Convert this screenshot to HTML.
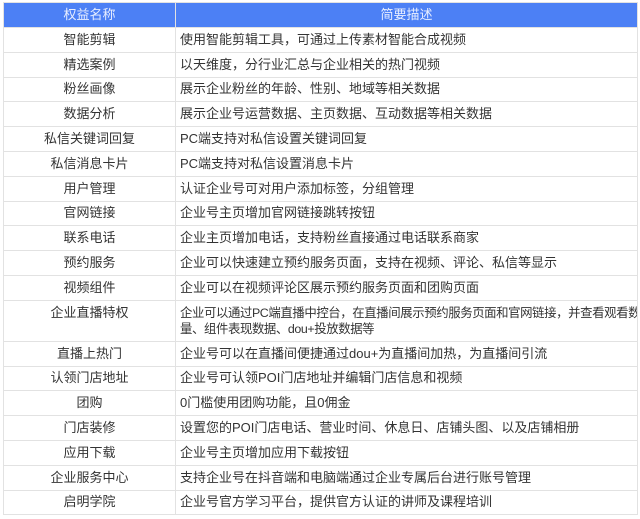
<!DOCTYPE html>
<html><head><meta charset="utf-8"><style>
html,body{margin:0;padding:0;background:#fff;width:640px;height:519px;overflow:hidden}
table{position:absolute;left:3px;top:2px;width:635px;border-collapse:collapse;font-family:"Liberation Sans","Noto Sans CJK SC",sans-serif;font-size:13px;color:#333;table-layout:fixed}
td,th{border:1px solid #e2e2e2;height:23.8px;padding:0 4px;line-height:16px;font-weight:normal}
th{background:#4c80f5;color:#e8eeff;height:24px;text-align:center}
td:first-child{text-align:center}
col.a{width:172px}
</style></head><body>
<table><colgroup><col class="a"><col></colgroup>
<tr><th>权益名称</th><th>简要描述</th></tr>
<tr><td>智能剪辑</td><td>使用智能剪辑工具，可通过上传素材智能合成视频</td></tr>
<tr><td>精选案例</td><td>以天维度，分行业汇总与企业相关的热门视频</td></tr>
<tr><td>粉丝画像</td><td>展示企业粉丝的年龄、性别、地域等相关数据</td></tr>
<tr><td>数据分析</td><td>展示企业号运营数据、主页数据、互动数据等相关数据</td></tr>
<tr><td>私信关键词回复</td><td>PC端支持对私信设置关键词回复</td></tr>
<tr><td>私信消息卡片</td><td>PC端支持对私信设置消息卡片</td></tr>
<tr><td>用户管理</td><td>认证企业号可对用户添加标签，分组管理</td></tr>
<tr><td>官网链接</td><td>企业号主页增加官网链接跳转按钮</td></tr>
<tr><td>联系电话</td><td>企业主页增加电话，支持粉丝直接通过电话联系商家</td></tr>
<tr><td>预约服务</td><td>企业可以快速建立预约服务页面，支持在视频、评论、私信等显示</td></tr>
<tr><td>视频组件</td><td>企业可以在视频评论区展示预约服务页面和团购页面</td></tr>
<tr><td style="vertical-align:top;padding-top:4px;height:36px">企业直播特权</td><td style="padding:3px 0 3px 4px;font-size:12.4px;letter-spacing:-0.4px;white-space:nowrap;overflow:hidden">企业可以通过PC端直播中控台，在直播间展示预约服务页面和官网链接，并查看观看数<br>量、组件表现数据、dou+投放数据等</td></tr>
<tr><td>直播上热门</td><td>企业号可以在直播间便捷通过dou+为直播间加热，为直播间引流</td></tr>
<tr><td>认领门店地址</td><td>企业号可认领POI门店地址并编辑门店信息和视频</td></tr>
<tr><td>团购</td><td>0门槛使用团购功能，且0佣金</td></tr>
<tr><td>门店装修</td><td>设置您的POI门店电话、营业时间、休息日、店铺头图、以及店铺相册</td></tr>
<tr><td>应用下载</td><td>企业号主页增加应用下载按钮</td></tr>
<tr><td>企业服务中心</td><td>支持企业号在抖音端和电脑端通过企业专属后台进行账号管理</td></tr>
<tr><td>启明学院</td><td>企业号官方学习平台，提供官方认证的讲师及课程培训</td></tr>
</table>
</body></html>
